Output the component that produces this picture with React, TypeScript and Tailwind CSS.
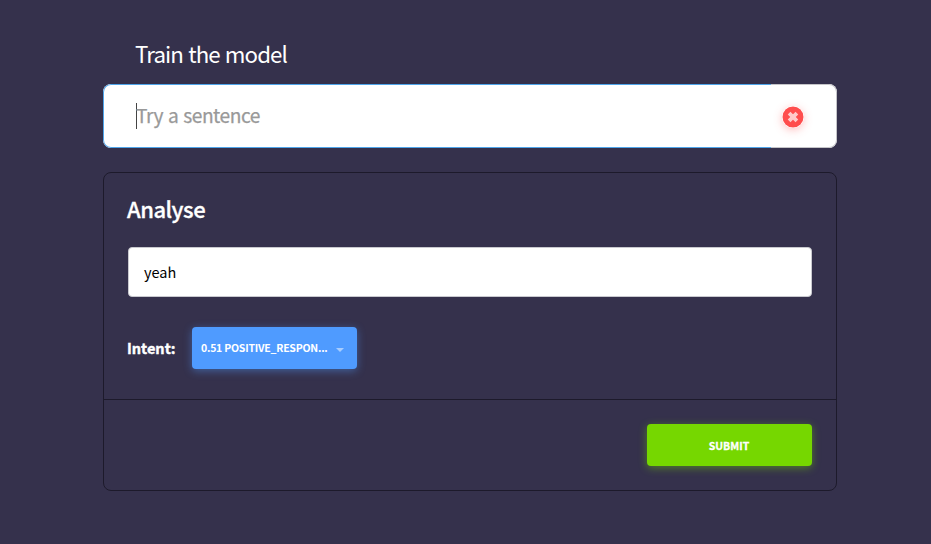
import React from "react";

function ClearIcon() {
  return (
    <svg viewBox="0 0 22 22" className="mt-px h-[22px] w-[22px] rounded-full shadow-[0_2px_8px_rgba(255,77,77,0.35)]">
      <circle cx="11" cy="11" r="10.5" fill="#ff4d4d" />
      <path d="M7.1 7.1l7.8 7.8M14.9 7.1l-7.8 7.8" stroke="#ffcaca" strokeWidth="3.8" strokeLinecap="butt" />
    </svg>
  );
}

export default function App() {
  return (
    <div className="h-[544px] w-[931px] bg-[#35314c] pl-[103px] pt-[35px] font-['Noto_Sans_CJK_SC','Noto_Sans',sans-serif] text-white">
      <main className="w-[734px]">
        <h1 className="pl-8 text-[22.3px] font-normal leading-9 tracking-[-0.9px] [word-spacing:1px]">Train the model</h1>
        <div className="mt-[13px] flex h-16 overflow-hidden rounded-lg bg-white">
          <div className="flex w-[668px] items-center rounded-l-lg border border-r-0 border-[#4fa5ea] pl-8">
            <span className="h-[26px] w-px bg-[#444]" />
            <span className="-ml-px -mt-0.5 text-[19.2px] leading-8 tracking-[-0.5px] text-[#999] [-webkit-text-stroke:0.25px_#999] [word-spacing:1.2px]">Try a sentence</span>
          </div>
          <button className="flex flex-1 items-center rounded-r-lg border border-l-0 border-[#c4c4c8] pl-[11px]" aria-label="Clear">
            <ClearIcon />
          </button>
        </div>

        <section className="mt-6 h-[319px] rounded-lg border border-[#1d1a2b]">
          <div className="h-[227px] border-b border-[#1d1a2b] px-6 pt-[17px]">
            <h2 className="-ml-px text-[22px] font-medium leading-9 tracking-[-0.5px] [-webkit-text-stroke:0.3px_white]">Analyse</h2>
            <div className="mt-[21px] flex h-[50px] items-center rounded border border-[#c9c9cf] bg-white pl-[15px] text-[14.5px] text-black">yeah</div>
            <div className="mt-[30px] flex h-[42px] items-center">
              <span className="-ml-px w-[65px] text-[14.5px] font-bold [-webkit-text-stroke:0.4px_white]">Intent:</span>
              <button className="flex h-[42px] w-[165px] items-center rounded bg-[#4f9bff] pl-[9px] text-[10.5px] font-bold shadow-[0_2px_8px_rgba(79,155,255,0.45)]">
                <span className="w-[135px] text-left tracking-[-0.23px]">0.51 POSITIVE_RESPON...</span>
                <svg viewBox="0 0 8 4" className="mt-[3px] h-1 w-2"><path d="M0 0h8L4 4z" fill="#a7cdff" /></svg>
              </button>
            </div>
          </div>
          <div className="flex justify-end px-6 pt-6">
            <button className="h-[42px] w-[165px] rounded bg-[#76d700] pr-px pt-0.5 text-[10.5px] font-bold shadow-[0_2px_8px_rgba(118,215,0,0.45)] [-webkit-text-stroke:0.3px_white]">SUBMIT</button>
          </div>
        </section>
      </main>
    </div>
  );
}
